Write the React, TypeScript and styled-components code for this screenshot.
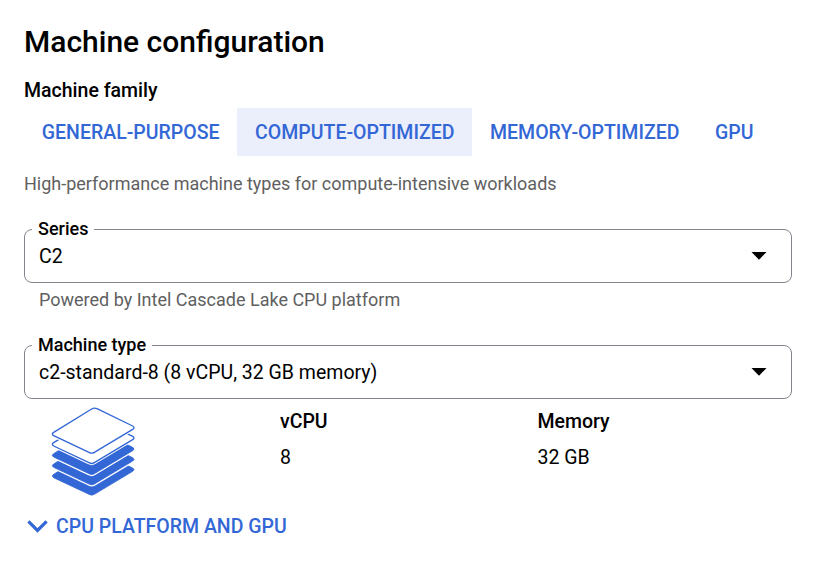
import React from "react";
import styled, { createGlobalStyle } from "styled-components";

const blue = "#3367d6";

const GlobalStyle = createGlobalStyle`
  *, *::before, *::after { box-sizing: border-box; }
  body {
    margin: 0;
    background: #fff;
    color: #000;
    font-family: Roboto, "Liberation Sans", sans-serif;
    font-size: 19.5px;
    line-height: 24px;
  }
`;

const Panel = styled.main`
  display: flex;
  flex-direction: column;
  width: 792px;
  padding: 24px 0 0 24px;
`;

const Title = styled.h1`
  margin: 0 0 19px;
  font-size: 30px;
  font-weight: 500;
  line-height: 36px;
`;

const SectionTitle = styled.h2`
  margin: 0 0 5px;
  font-size: 19.5px;
  font-weight: 500;
  line-height: 24px;
`;

const Tabs = styled.div`
  display: flex;
  height: 48px;
  margin-bottom: 16px;
`;

const Tab = styled.button<{ $active: boolean }>`
  flex: none;
  padding: 2px 17.8px 0;
  border: 0;
  background: ${(p) => (p.$active ? "#ebeefb" : "transparent")};
  color: ${blue};
  font: inherit;
  font-weight: 500;
  white-space: nowrap;
  cursor: pointer;
`;

const Hint = styled.p<{ $inset?: boolean }>`
  margin: 0;
  padding-left: ${(p) => (p.$inset ? 15 : 0)}px;
  color: #5f5f5f;
  font-size: 18px;
  line-height: 24px;
`;

const Field = styled.fieldset`
  height: 65px;
  min-width: 0;
  margin: 22px 0 5px;
  padding: 0;
  border: 1px solid #80868b;
  border-radius: 8px;
`;

const Legend = styled.legend`
  margin-left: 7px;
  padding: 0 6px 2px;
  font-size: 18px;
  font-weight: 500;
  line-height: 21px;
`;

const Select = styled.div`
  display: flex;
  align-items: center;
  justify-content: space-between;
  height: 30px;
  padding: 0 24px 0 14px;
`;

const Value = styled.span`
  padding-top: 2px;
`;

const Specs = styled.section`
  display: grid;
  grid-template-columns: 256px 257.5px 1fr;
  height: 109px;
  padding-top: 1px;
`;

const StackIcon = styled.svg`
  display: block;
  width: 86px;
  height: 92px;
  margin-left: 26px;
`;

const Spec = styled.dl`
  display: grid;
  grid-auto-rows: 24px;
  row-gap: 12px;
  align-content: start;
  margin: 5px 0 0;

  dt { font-weight: 500; }
  dd { margin: 0; }
`;

const Expander = styled.button`
  display: flex;
  align-items: center;
  align-self: flex-start;
  gap: 8px;
  height: 26px;
  margin-left: 3px;
  padding: 0;
  border: 0;
  background: none;
  color: ${blue};
  font: inherit;
  font-weight: 500;
  cursor: pointer;
`;

const families = ["GENERAL-PURPOSE", "COMPUTE-OPTIMIZED", "MEMORY-OPTIMIZED", "GPU"];
const specs = [
  { label: "vCPU", value: "8" },
  { label: "Memory", value: "32 GB" },
];

const Caret = () => (
  <svg width="16" height="8" viewBox="0 0 16 8" aria-hidden="true">
    <path d="M.5 0h15L8 7.8Z" fill="#000" />
  </svg>
);

const Chevron = () => (
  <svg width="21" height="13" viewBox="0 0 21 13" aria-hidden="true">
    <path d="M1.4 1.4 10.5 10.4 19.6 1.4" fill="none" stroke={blue} strokeWidth="3.2" />
  </svg>
);

const slabPath =
  "M155 24Q163 19 171 23L278 75Q286 80 278 85L163 154Q155 159 147 154L41 104Q33 99 41 94Z";

function Slab({ dy, filled = false }: { dy: number; filled?: boolean }) {
  return (
    <g transform={`translate(0 ${dy})`}>
      <path d={slabPath} fill="#fff" stroke="#fff" strokeWidth="10" />
      <path
        d={slabPath}
        fill={filled ? blue : "#fff"}
        stroke={blue}
        strokeWidth={filled ? 2.5 : 4}
      />
    </g>
  );
}

const Layers = () => (
  <StackIcon viewBox="30 12 258 276" aria-hidden="true">
    <Slab dy={126} filled />
    <Slab dy={95} filled />
    <Slab dy={64} filled />
    <Slab dy={31} />
    <Slab dy={0} />
  </StackIcon>
);

function SelectField({ label, value }: { label: string; value: string }) {
  return (
    <Field>
      <Legend>{label}</Legend>
      <Select>
        <Value>{value}</Value>
        <Caret />
      </Select>
    </Field>
  );
}

export default function App() {
  return (
    <>
      <GlobalStyle />
      <Panel>
        <Title>Machine configuration</Title>
        <SectionTitle>Machine family</SectionTitle>
        <Tabs>
          {families.map((name) => (
            <Tab key={name} $active={name === "COMPUTE-OPTIMIZED"}>
              {name}
            </Tab>
          ))}
        </Tabs>
        <Hint>High-performance machine types for compute-intensive workloads</Hint>
        <SelectField label="Series" value="C2" />
        <Hint $inset>Powered by Intel Cascade Lake CPU platform</Hint>
        <SelectField label="Machine type" value="c2-standard-8 (8 vCPU, 32 GB memory)" />
        <Specs>
          <Layers />
          {specs.map((s) => (
            <Spec key={s.label}>
              <dt>{s.label}</dt>
              <dd>{s.value}</dd>
            </Spec>
          ))}
        </Specs>
        <Expander>
          <Chevron />
          <Value>CPU PLATFORM AND GPU</Value>
        </Expander>
      </Panel>
    </>
  );
}
